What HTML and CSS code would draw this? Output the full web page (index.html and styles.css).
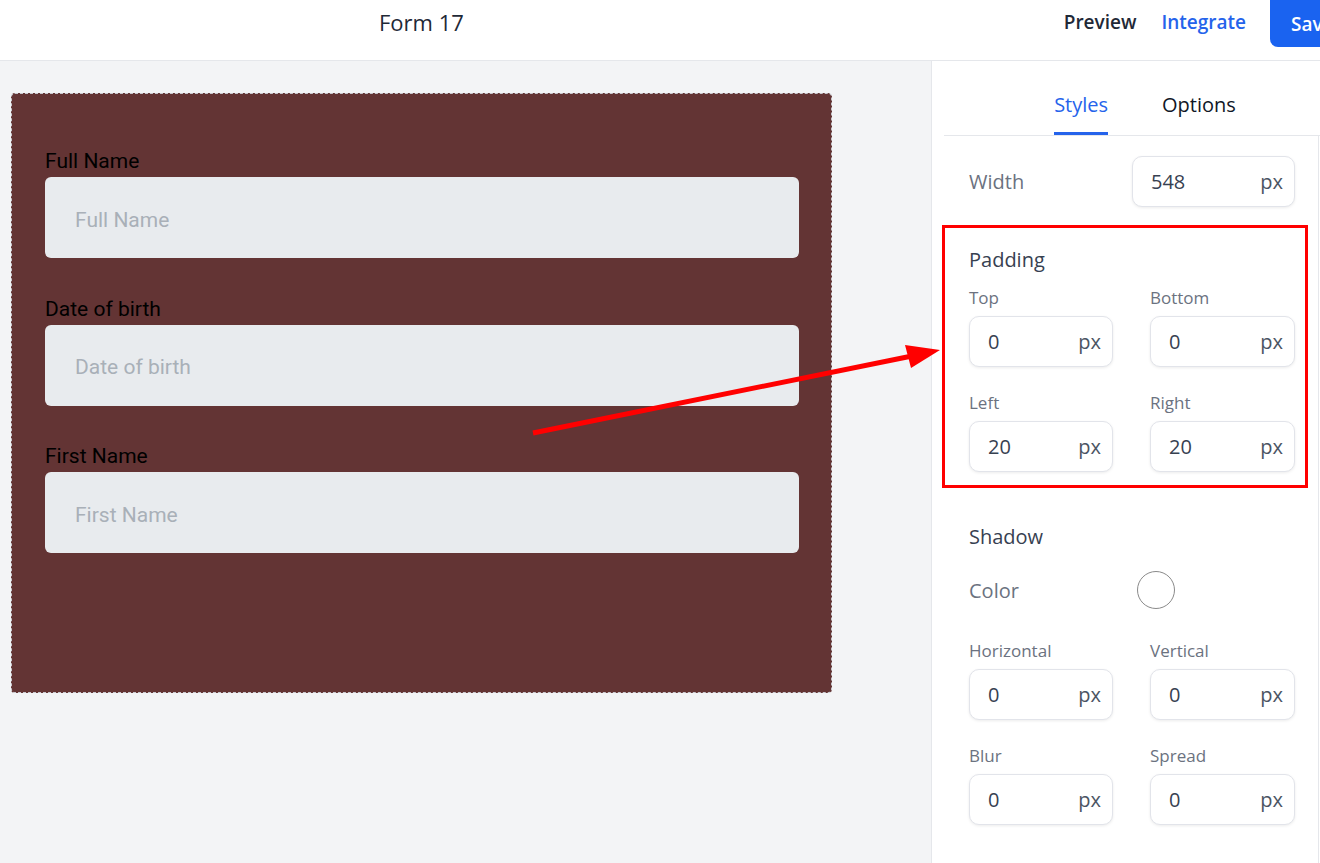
FILE: index.html
```html
<!DOCTYPE html>
<html lang="en">
<head>
<meta charset="utf-8">
<title>Form 17</title>
<link rel="stylesheet" href="styles.css">
</head>
<body>
<header class="topbar">
  <div class="title">Form 17</div>
  <nav class="actions">
    <a class="preview">Preview</a>
    <a class="integrate">Integrate</a>
    <button class="save">Save</button>
  </nav>
</header>
<main class="main">
  <section class="canvas">
    <form class="card">
      <div class="field">
        <label class="flabel">Full Name</label>
        <div class="finput">Full Name</div>
      </div>
      <div class="field">
        <label class="flabel">Date of birth</label>
        <div class="finput">Date of birth</div>
      </div>
      <div class="field">
        <label class="flabel">First Name</label>
        <div class="finput">First Name</div>
      </div>
    </form>
  </section>
  <aside class="panel">
    <div class="tabs">
      <div class="tab active">Styles</div>
      <div class="tab">Options</div>
    </div>
    <div class="scroll">
      <div class="row-width">
        <span class="plabel">Width</span>
        <div class="box wide"><span class="val">548</span><span class="unit">px</span></div>
      </div>
      <div class="section padding-sec">
        <div class="sec-title">Padding</div>
        <div class="grid">
          <div class="cell"><div class="small">Top</div><div class="box"><span class="val">0</span><span class="unit">px</span></div></div>
          <div class="cell"><div class="small">Bottom</div><div class="box"><span class="val">0</span><span class="unit">px</span></div></div>
          <div class="cell"><div class="small">Left</div><div class="box"><span class="val">20</span><span class="unit">px</span></div></div>
          <div class="cell"><div class="small">Right</div><div class="box"><span class="val">20</span><span class="unit">px</span></div></div>
        </div>
        <div class="highlight"></div>
      </div>
      <div class="section shadow-sec">
        <div class="sec-title">Shadow</div>
        <div class="row-color">
          <span class="plabel">Color</span>
          <span class="swatch"></span>
        </div>
        <div class="grid">
          <div class="cell"><div class="small">Horizontal</div><div class="box"><span class="val">0</span><span class="unit">px</span></div></div>
          <div class="cell"><div class="small">Vertical</div><div class="box"><span class="val">0</span><span class="unit">px</span></div></div>
          <div class="cell"><div class="small">Blur</div><div class="box"><span class="val">0</span><span class="unit">px</span></div></div>
          <div class="cell"><div class="small">Spread</div><div class="box"><span class="val">0</span><span class="unit">px</span></div></div>
        </div>
      </div>
    </div>
  </aside>
</main>
<svg class="arrow" width="1320" height="863" viewBox="0 0 1320 863" aria-hidden="true">
  <line x1="533" y1="433" x2="912" y2="356" stroke="#ff0000" stroke-width="5"/>
  <polygon points="940,350 905,345 911,368" fill="#ff0000"/>
</svg>
</body>
</html>
```
FILE: styles.css
```css
* { box-sizing: border-box; }
html, body { margin: 0; padding: 0; }
body {
  width: 1320px;
  height: 863px;
  overflow: hidden;
  font-family: "Open Sans", "Noto Sans", sans-serif;
  color: #1f2937;
  background: #fff;
  position: relative;
}
.topbar {
  height: 61px;
  display: flex;
  align-items: flex-start;
  justify-content: space-between;
  border-bottom: 1px solid #e5e7eb;
  background: #fff;
}
.title {
  margin-left: 379px;
  margin-top: 7px;
  font-size: 22px;
  line-height: 30px;
  color: #1f2937;
}
.actions {
  display: flex;
  align-items: flex-start;
  gap: 25px;
}
.preview, .integrate {
  margin-top: 8px;
  font-size: 19px;
  line-height: 28px;
  font-weight: 600;
}
.preview { color: #1f2937; }
.integrate { color: #2563eb; margin-right: -1px; }
.save {
  width: 80px;
  height: 55px;
  margin-top: -8px;
  border: 0;
  border-radius: 8px;
  background: #1a63f0;
  color: #fff;
  font-family: inherit;
  font-size: 19px;
  font-weight: 600;
  text-align: left;
  padding: 8px 0 0 21px;
  margin-right: -30px;
}
.main {
  display: flex;
  height: 802px;
}
.canvas {
  width: 932px;
  background: #f3f4f6;
  padding: 32px 0 0 11px;
  border-right: 1px solid #e5e7eb;
}
.card {
  width: 821px;
  height: 600px;
  background: #633434;
  border: 1px dashed #c9c9cf;
  border-radius: 4px;
  padding: 55px 32px 0 33px;
  display: flex;
  flex-direction: column;
  gap: 38.5px;
  font-family: Roboto, "Liberation Sans", sans-serif;
}
.field {
  display: flex;
  flex-direction: column;
  gap: 3px;
}
.flabel {
  font-size: 21px;
  line-height: 25px;
  color: #000;
}
.finput {
  height: 81px;
  background: #e8ebee;
  border-radius: 6px;
  padding: 4px 0 0 30px;
  display: flex;
  align-items: center;
  font-size: 21px;
  color: #a9b0b8;
}
.panel {
  flex: 1;
  display: flex;
  flex-direction: column;
  background: #fff;
  padding-left: 12px;
}
.tabs {
  display: flex;
  justify-content: center;
  gap: 54px;
  height: 75px;
  border-bottom: 1px solid #e5e7eb;
  padding-left: 26px;
}
.tab {
  padding-top: 29px;
  font-size: 20px;
  line-height: 30px;
  color: #111827;
  height: 74px;
}
.tab.active {
  color: #2563eb;
  border-bottom: 3px solid #2563eb;
}
.scroll {
  flex: 1;
  padding: 20px 23px 0 25px;
  border-right: 1px solid #e5e7eb;
  margin-right: 1px;
}
.row-width {
  display: flex;
  justify-content: space-between;
  align-items: center;
}
.plabel {
  font-size: 20px;
  color: #6b7280;
}
.box {
  height: 51px;
  border: 1px solid #e2e4ea;
  border-radius: 10px;
  background: #fff;
  box-shadow: 0 1px 3px rgba(0,0,0,0.08);
  display: flex;
  align-items: center;
  justify-content: space-between;
  padding: 0 11px 0 18px;
  font-size: 20px;
  color: #374151;
}
.box.wide { width: 163px; }
.unit { color: #4b5563; }
.section { position: relative; }
.padding-sec { padding: 39px 0 16px; }
.sec-title {
  font-size: 20px;
  line-height: 28px;
  color: #374151;
  margin-bottom: 12px;
}
.grid {
  display: grid;
  grid-template-columns: 144px 145px;
  column-gap: 37px;
  row-gap: 24px;
}
.small {
  font-size: 17px;
  line-height: 24px;
  color: #6b7280;
  margin-bottom: 6px;
}
.highlight {
  position: absolute;
  left: -27px;
  right: -13px;
  top: 18px;
  bottom: 0;
  border: 3px solid #ff0000;
}
.shadow-sec { padding-top: 35px; }
.shadow-sec .sec-title { margin-bottom: 20px; }
.row-color {
  display: flex;
  align-items: center;
  height: 38px;
  margin-bottom: 30px;
}
.row-color .plabel { width: 168px; }
.swatch {
  width: 38px;
  height: 38px;
  border-radius: 50%;
  border: 1px solid #8a8a8a;
  background: #fff;
}
.arrow {
  position: absolute;
  left: 0;
  top: 0;
  pointer-events: none;
}
```
